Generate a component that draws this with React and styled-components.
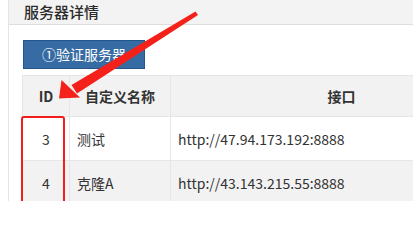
import React from "react";
import styled, { createGlobalStyle } from "styled-components";

const GlobalStyle = createGlobalStyle`
  html, body {
    margin: 0;
    padding: 0;
    background: #fff;
    overflow: hidden;
  }
  body {
    font-family: "Noto Sans CJK SC", "Noto Sans", sans-serif;
    color: #333;
  }
`;

const servers = [
  { id: 3, name: "测试", url: "http://47.94.173.192:8888" },
  { id: 4, name: "克隆A", url: "http://43.143.215.55:8888" },
];

const Page = styled.div`
  position: relative;
  width: 413px;
  height: 201px;
  overflow: hidden;
`;

const Panel = styled.div`
  margin-left: 8px;
  height: 100%;
  border-left: 1px solid #e4e4e4;
`;

const PanelHeader = styled.div`
  height: 25px;
  box-sizing: border-box;
  background: #f3f3f3;
  border-bottom: 1px solid #dedede;
  padding-left: 15px;
  font-size: 15px;
  font-weight: 500;
  line-height: 24px;
  color: #2b2b2b;
`;

const PanelBody = styled.div`
  padding: 15px 0 0 14px;
`;

const Button = styled.button`
  height: 29px;
  box-sizing: border-box;
  padding: 0 18px;
  background: #376ba3;
  border: 1px solid #23558a;
  border-radius: 0;
  color: #fff;
  font-family: inherit;
  font-size: 14px;
  line-height: 27px;
  cursor: pointer;
`;

const Table = styled.table`
  margin-top: 6px;
  margin-left: -1px;
  border-collapse: collapse;
  table-layout: fixed;
  width: 487px;
  font-size: 14px;
`;

const Th = styled.th`
  width: ${(p) => p.$w}px;
  height: 40px;
  padding: 0;
  background: #f2f2f2;
  border: 1px solid #e6e6e6;
  font-weight: bold;
  text-align: center;
  color: #333;
`;

const Row = styled.tr`
  background: ${(p) => (p.$alt ? "#f2f2f2" : "#fff")};
`;

const Td = styled.td`
  height: 43px;
  padding: 0 7px;
  border: 1px solid #e6e6e6;
  text-align: ${(p) => (p.$center ? "center" : "left")};
  color: #333;
  white-space: nowrap;
`;

const Highlight = styled.div`
  position: absolute;
  left: 21px;
  top: 116px;
  width: 44px;
  height: 100px;
  box-sizing: border-box;
  border: 2.5px solid #f21d1d;
  border-radius: 3px;
`;

const Arrow = styled.svg`
  position: absolute;
  left: 0;
  top: 0;
  pointer-events: none;
`;

export default function App() {
  return (
    <Page>
      <GlobalStyle />
      <Panel>
        <PanelHeader>服务器详情</PanelHeader>
        <PanelBody>
          <Button>①验证服务器</Button>
          <Table>
            <thead>
              <tr>
                <Th $w={46}>ID</Th>
                <Th $w={100}>自定义名称</Th>
                <Th $w={341}>接口</Th>
              </tr>
            </thead>
            <tbody>
              {servers.map((s, i) => (
                <Row key={s.id} $alt={i % 2 === 1}>
                  <Td $center>{s.id}</Td>
                  <Td>{s.name}</Td>
                  <Td>{s.url}</Td>
                </Row>
              ))}
            </tbody>
          </Table>
        </PanelBody>
      </Panel>
      <Highlight />
      <Arrow width="413" height="201" viewBox="0 0 413 201">
        <polygon points="195.5,11.5 198,15 77,93.5 71.5,85" fill="#f4211a" />
        <polygon points="59,98.5 61.5,80 80,97.5" fill="#f4211a" />
      </Arrow>
    </Page>
  );
}
